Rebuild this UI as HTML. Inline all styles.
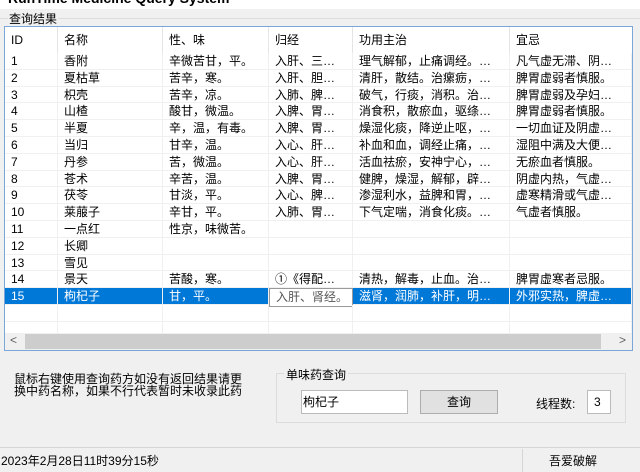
<!DOCTYPE html>
<html><head><meta charset="utf-8"><style>
*{margin:0;padding:0;box-sizing:border-box}
body{width:640px;height:472px;background:#f0f0f0;font-family:"Liberation Sans","Noto Sans CJK SC","WenQuanYi Zen Hei",sans-serif;font-size:12px;color:#000;position:relative;overflow:hidden}
.a{position:absolute;white-space:nowrap}
#lv{position:absolute;left:4px;top:26px;width:629px;height:325px;background:#fff;border:1px solid #7aa7d8}
.hd{position:absolute;top:0;height:26px;line-height:26px;border-right:1px solid #e5e5e5;padding-left:6px}
.row{position:absolute;left:0;width:627px;height:16.8px;border-bottom:1px solid #f0f0f0}
.c{position:absolute;top:0;height:16.8px;line-height:16px;padding-left:6px;border-right:1px solid #f0f0f0;overflow:hidden}
.sel{background:#0078d7;color:#fff}
</style></head><body>
<div class="a" style="left:0;top:0;width:640px;height:9px;background:#fff;overflow:hidden"><div class="a" style="left:8px;top:-10px;font-weight:bold;font-size:14px">RunTime Medicine Query System</div></div>
<div class="a" style="left:0;top:18px;width:640px;border-top:1px solid #dcdcdc"></div>
<div class="a" style="left:8px;top:10px;background:#f0f0f0;padding:0 1px">查询结果</div>
<div id="lv">
<div class="hd" style="left:0;width:53px">ID</div>
<div class="hd" style="left:53px;width:105px">名称</div>
<div class="hd" style="left:158px;width:106px">性、味</div>
<div class="hd" style="left:264px;width:84px">归经</div>
<div class="hd" style="left:348px;width:157px">功用主治</div>
<div class="hd" style="left:505px;width:122px;border-right:none">宜忌</div>
<div id="rows"></div>
<div class="a" style="left:0;top:306px;width:627px;height:17px;background:#f0f0f0"></div>
<div class="a" style="left:20px;top:307px;width:576px;height:15px;background:#cdcdcd"></div>
<div class="a" style="left:5px;top:306px;color:#606060;font-size:12px">&lt;</div>
<div class="a" style="left:614px;top:306px;color:#606060;font-size:12px">&gt;</div>
</div>
<div class="a" style="left:14px;top:373px;line-height:12px">鼠标右键使用查询药方如没有返回结果请更<br>换中药名称，如果不行代表暂时未收录此药</div>
<div class="a" style="left:276px;top:373px;width:350px;height:50px;border:1px solid #dcdcdc"></div>
<div class="a" style="left:284px;top:366px;background:#f0f0f0;padding:0 2px">单味药查询</div>
<div class="a" style="left:301px;top:390px;width:107px;height:24px;background:#fff;border:1px solid #bbb;line-height:22px;padding-left:1px">枸杞子</div>
<div class="a" style="left:420px;top:390px;width:78px;height:24px;background:#e1e1e1;border:1px solid #adadad;line-height:22px;text-align:center">查询</div>
<div class="a" style="left:536px;top:395px">线程数:</div>
<div class="a" style="left:587px;top:390px;width:24px;height:24px;background:#fff;border:1px solid #bbb;line-height:22px;padding-left:6px">3</div>
<div class="a" style="left:0;top:447px;width:640px;border-top:1px solid #d6d6d6"></div>
<div class="a" style="left:522px;top:449px;height:23px;border-left:1px solid #d6d6d6"></div>
<div class="a" style="left:1px;top:452px">2023年2月28日11时39分15秒</div>
<div class="a" style="left:549px;top:452px">吾爱破解</div>
<script>
var d=[["1","香附","辛微苦甘，平。","入肝、三…","理气解郁，止痛调经。…","凡气虚无滞、阴…"],
["2","夏枯草","苦辛，寒。","入肝、胆…","清肝，散结。治瘰疬，…","脾胃虚弱者慎服。"],
["3","枳壳","苦辛，凉。","入肺、脾…","破气，行痰，消积。治…","脾胃虚弱及孕妇…"],
["4","山楂","酸甘，微温。","入脾、胃…","消食积，散瘀血，驱绦…","脾胃虚弱者慎服。"],
["5","半夏","辛，温，有毒。","入脾、胃…","燥湿化痰，降逆止呕，…","一切血证及阴虚…"],
["6","当归","甘辛，温。","入心、肝…","补血和血，调经止痛，…","湿阻中满及大便…"],
["7","丹参","苦，微温。","入心、肝…","活血祛瘀，安神宁心，…","无瘀血者慎服。"],
["8","苍术","辛苦，温。","入脾、胃…","健脾，燥湿，解郁，辟…","阴虚内热，气虚…"],
["9","茯苓","甘淡，平。","入心、脾…","渗湿利水，益脾和胃，…","虚寒精滑或气虚…"],
["10","莱菔子","辛甘，平。","入肺、胃…","下气定喘，消食化痰。…","气虚者慎服。"],
["11","一点红","性京，味微苦。","","",""],
["12","长卿","","","",""],
["13","雪见","","","",""],
["14","景天","苦酸，寒。","①《得配…","清热，解毒，止血。治…","脾胃虚寒者忌服。"],
["15","枸杞子","甘，平。","入肝、肾经。","滋肾，润肺，补肝，明…","外邪实热，脾虚…"],
["","","","","",""],["","","","","",""]];
var L=[0,53,158,264,348,505],W=[53,105,106,84,157,122],h="";
d.forEach(function(r,i){h+='<div class="row'+(i==14?' sel':'')+'" style="top:'+(26+i*16.8)+'px">';
r.forEach(function(t,j){var s='left:'+L[j]+'px;width:'+W[j]+'px';
if(i==14&&j==3)s+=';background:#fff;color:#555;border:1px solid #999;height:19px;top:0';
h+='<div class="c" style="'+s+'">'+t+'</div>'});h+='</div>'});
document.getElementById('rows').innerHTML=h;
</script>
</body></html>
